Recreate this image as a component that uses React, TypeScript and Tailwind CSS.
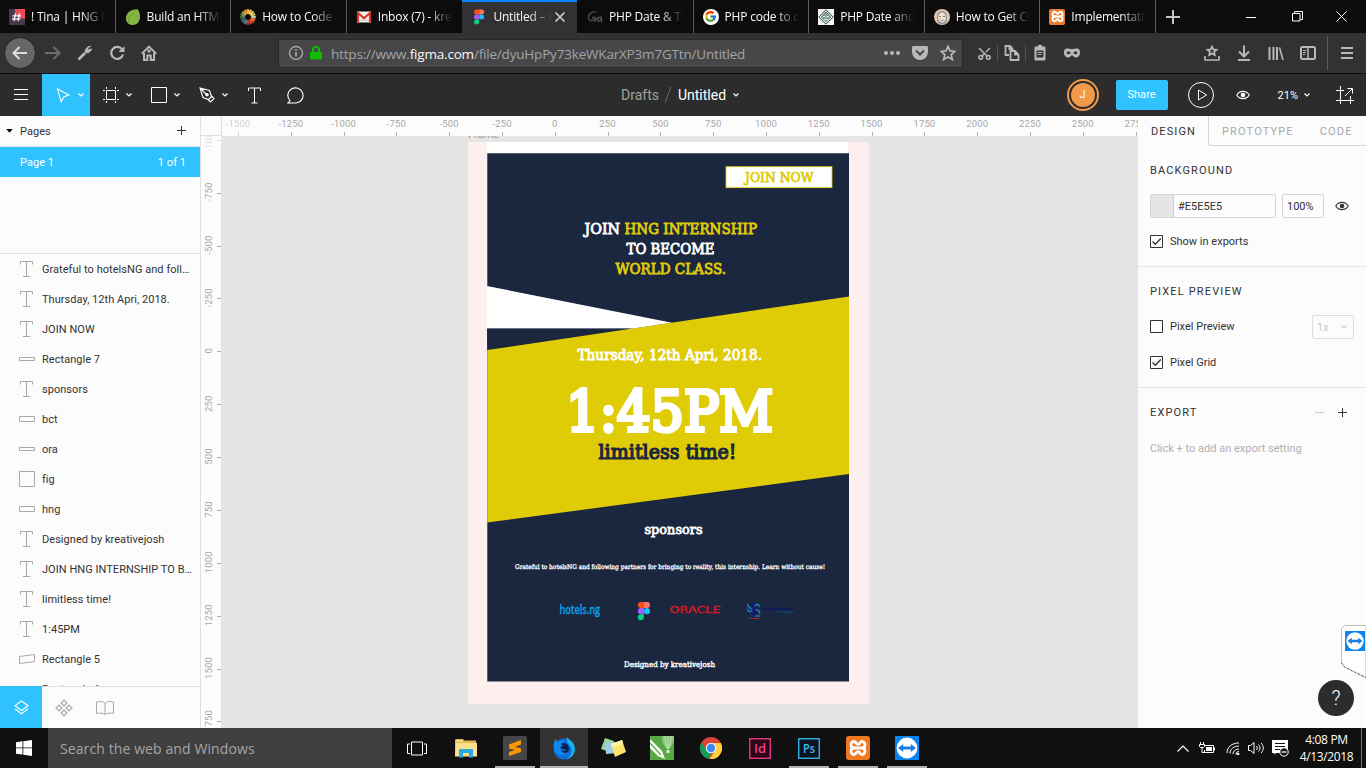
import React from "react";
import { Scissors } from "lucide-react";
import { FcGoogle } from "react-icons/fc";
import { SiXampp } from "react-icons/si";

type SvgProps = { w: number; h: number; children: React.ReactNode; className?: string; sw?: number };

/* Stroked drawing whose user units are CSS pixels */
function Svg({ w, h, children, className = "", sw = 1 }: SvgProps) {
  return (
    <svg width={w} height={h} viewBox={`0 0 ${w} ${h}`} fill="none" stroke="currentColor" strokeWidth={sw} className={"shrink-0 " + className}>
      {children}
    </svg>
  );
}

/* ---------- shared logos ---------- */

function FigmaMark({ x = 0, y = 0, s = 1 }: { x?: number; y?: number; s?: number }) {
  return (
    <g transform={`translate(${x} ${y}) scale(${s})`} stroke="none">
      <path d="M3 0h3v6H3a3 3 0 0 1 0-6z" fill="#f24e1e" />
      <path d="M6 0h3a3 3 0 0 1 0 6H6z" fill="#ff7262" />
      <path d="M3 6h3v6H3a3 3 0 0 1 0-6z" fill="#a259ff" />
      <circle cx="9" cy="9" r="3" fill="#1abcfe" />
      <path d="M3 12h3v3a3 3 0 1 1-3-3z" fill="#0acf83" />
    </g>
  );
}

function Viewer({ size }: { size: number }) {
  return (
    <svg width={size} height={size} viewBox="0 0 24 24" className="shrink-0">
      <rect width="24" height="24" rx="0.6" fill="#0a84ee" />
      <circle cx="12" cy="12" r="10.4" fill="#fff" />
      <path d="M3 12l5.2-4v2.6h7.6V8l5.2 4-5.2 4v-2.6H8.200V16z" fill="#1b7fe0" />
    </svg>
  );
}

/* ---------- browser tabs ---------- */

const Chat = (
  <svg width="16" height="16" viewBox="0 0 16 16">
    <rect width="16" height="16" fill="#4a374c" />
    <path d="M6 0h10v10l-5-1-5-4z" fill="#eb4d5c" />
    <path d="M6.500 4.500L5 12M10.500 4.500L9 12M3.500 6.800h8.500M3 9.800h8.500" stroke="#fff" strokeWidth="1.300" />
  </svg>
);
const Leaf = (
  <svg width="16" height="16" viewBox="0 0 16 16">
    <path d="M12.500 0.300C6 0 1 4 1 9.500c0 4 3 6.500 6.500 6.500C12 16 15 12.500 15 7.500c0-3-1-6-2.500-7.200z" fill="#82b541" />
    <path d="M3 13C3.500 8.500 5.500 6 9 4" stroke="#6a9a2f" fill="none" />
  </svg>
);
const wheel = ["#f4b73c", "#f0c14b", "#ebcf6d", "#d7c66b", "#a9d3cf", "#f06a2a", "#e9542b", "#c43b2f", "#b5382e", "#5f7d86", "#4d6b75", "#3f6066", "#4c7049", "#78994a", "#b8a23f", "#f09a2e"];
const Wheel = (
  <svg width="16" height="16" viewBox="0 0 16 16">
    {wheel.map((c, i) => (
      <path key={i} d="M8 0.200v4.800" stroke={c} strokeWidth="2.300" transform={`rotate(${i * 22.5} 8 8)`} />
    ))}
  </svg>
);
const Mail = (
  <svg width="16" height="16" viewBox="0 0 16 16">
    <rect x="1" y="2.500" width="14" height="11" fill="#f3f0ee" />
    <path d="M3 12l5-5 5 5" fill="#dcd8d6" />
    <path d="M2 13.500V4l6 5 6-5v9.500" fill="none" stroke="#d8382c" strokeWidth="2.200" />
  </svg>
);
const FigmaTab = (
  <svg width="16" height="16" viewBox="0 0 16 16">
    <FigmaMark x={3} y={0.5} s={0.84} />
  </svg>
);
const Ga = (
  <svg width="16" height="16" viewBox="0 0 16 16" fill="none" stroke="#4d4d4d" strokeWidth="1.300">
    <path d="M9.500 3C5.500 1.500 1 5.500 1.500 9c.500 3.500 5 3.500 6.500-.5H5M8 13c-.5-4 5-5.500 6.500-4.500M14.500 8c-3 0-4.500 2.500-3.500 4 1 1 3 0 3.500-4v5.500" />
  </svg>
);
const Goog = (
  <span className="flex size-4 items-center justify-center rounded-full bg-white"><FcGoogle size={13} /></span>
);
const Diamond = (
  <svg width="16" height="16" viewBox="0 0 16 16">
    <rect width="16" height="16" fill="#f4f4f2" />
    <path d="M8 .8l7.200 7.200L8 15.200.8 8z" fill="#dfe5e0" stroke="#3a403c" />
    <path d="M8 3l4.500 5L8 12.500 3.500 8z" fill="#7fa893" stroke="#4d5c54" strokeWidth=".8" />
    <path d="M5 7.500h2.300M8.700 7.500H11M6 10c1 1 3 1 4 0" stroke="#e5ece8" strokeWidth="1" fill="none" />
  </svg>
);
const Face = (
  <svg width="16" height="16" viewBox="0 0 16 16">
    <circle cx="8" cy="8" r="8" fill="#e5c9a6" />
    <path d="M3 12V7c0-3 2-5 5-5s5 2 5 5v5l-2 3H5z" fill="#8f9aa8" />
    <ellipse cx="8" cy="8.500" rx="3.900" ry="5" fill="#f3dfcd" />
    <path d="M5 7.500h2M9 7.500h2M6.500 11c1 .8 2 .8 3 0" stroke="#6f7d90" fill="none" />
  </svg>
);
const XamppTab = (
  <span className="flex size-4 items-center justify-center rounded-[2px] bg-[#ef7a2c] text-white"><XamppKnot size={13} /></span>
);

function XamppKnot({ size }: { size: number }) {
  return (
    <svg width={size} height={size} viewBox="0 0 20 20" fill="none" stroke="#fff" strokeWidth="3.200" strokeLinecap="round">
      <path d="M7 9.800H4.800C2 9.800 1.800 6 3 4c1.500-2 4-1.500 5 .5.800 1.800 3.200 1.800 4 0 1-2 3.500-2.500 5-.5 1.200 2 1 5.800-1.800 5.800H13" />
      <path d="M7 10.200H4.800C2 10.200 1.800 14 3 16c1.500 2 4 1.500 5-.5.800-1.800 3.200-1.800 4 0 1 2 3.500 2.500 5 .5 1.200-2 1-5.800-1.800-5.800H13M8.500 10h3" />
    </svg>
  );
}

const tabs: { icon: React.ReactNode; title: string; active?: boolean; line?: boolean }[] = [
  { icon: Chat, title: "! Tina | HNG Inte", line: true },
  { icon: Leaf, title: "Build an HTML", line: true },
  { icon: Wheel, title: "How to Code a", line: true },
  { icon: Mail, title: "Inbox (7) - kreati" },
  { icon: FigmaTab, title: "Untitled – Fig", active: true },
  { icon: Ga, title: "PHP Date & Tim", line: true },
  { icon: Goog, title: "PHP code to co", line: true },
  { icon: Diamond, title: "PHP Date and T", line: true },
  { icon: Face, title: "How to Get Cu", line: true },
  { icon: XamppTab, title: "Implementatio", line: true },
];

function TabBar() {
  return (
    <div className="flex h-[33px] bg-[#0c0c0d] text-[12px] text-[#f9f9fa]">
      {tabs.map((t) => (
        <div
          key={t.title}
          className={
            "flex w-[115.6px] shrink-0 items-center border-r pl-[9px] " +
            (t.active ? "border-transparent bg-[#323234] bg-clip-padding shadow-[inset_0_2px_0_#0a84ff] " : t.line ? "border-[#5b5b5d] " : "border-transparent ")
          }
        >
          {t.icon}
          <span
            className={
              "ml-[6px] overflow-hidden whitespace-nowrap tracking-[-0.2px] " +
              (t.active
                ? "w-[60px] [mask-image:linear-gradient(90deg,#000_60%,transparent_98%)]"
                : "w-[76px] [mask-image:linear-gradient(90deg,#000_66%,transparent_98%)]")
            }
          >
            {t.title}
          </span>
          {t.active && (
            <Svg w={12} h={12} sw={1.6} className="ml-[1px] text-[#d0d0d2]"><path d="M1.500 1.500l9 9M10.500 1.500l-9 9" /></Svg>
          )}
        </div>
      ))}
      <div className="flex w-[34px] items-center justify-center text-[#c4c4c5]">
        <Svg w={14} h={14} sw={2}><path d="M7 0v14M0 7h14" /></Svg>
      </div>
      <div className="ml-auto flex items-center text-white">
        <div className="flex w-[46px] justify-center"><Svg w={10} h={10}><path d="M0 5.500h10" /></Svg></div>
        <div className="flex w-[46px] justify-center"><Svg w={11} h={11}><path d="M.5 2.500h7.500v7.500H.5zM2.500 2.500V.5h8v8H8.500" /></Svg></div>
        <div className="flex w-[46px] justify-center pr-1"><Svg w={11} h={11}><path d="M.5.5l10 10M10.500.5l-10 10" /></Svg></div>
      </div>
    </div>
  );
}

/* ---------- browser navigation ---------- */

function Slot({ children, className = "w-8" }: { children: React.ReactNode; className?: string }) {
  return <div className={"flex shrink-0 items-center justify-center " + className}>{children}</div>;
}

const starPath = "M8 1.400l2 4.500 4.800.5-3.600 3.200 1.100 4.800L8 11.900l-4.300 2.500 1.100-4.800L1.200 6.400 6 5.900z";

function NavBar() {
  return (
    <div className="flex h-[41px] items-center border-b border-[#0c0c0d] bg-[#323234] pl-1 text-[#b8b8ba]">
      <div className="flex size-8 items-center justify-center rounded-full border border-[#252526] bg-[#666667] text-[#dcdcdc]">
        <Svg w={16} h={16} sw={2}><path d="M15 8H1.500M7.500 2L1.500 8l6 6" /></Svg>
      </div>
      <Slot className="ml-px w-8 text-[#6d6d6f]"><Svg w={16} h={16} sw={2}><path d="M0 8h14.500M8.500 2l6 6-6 6" /></Svg></Slot>
      <Slot><Svg w={16} h={16} sw={2}><path d="M1.500 14.500L8 8" strokeWidth="2.600" /><path d="M13.800 1.200l-3 .6-2.600 2.900v3.100h3.300l3.200-3-.5-1-2.500 1.300-1.200-1.200 2.300-2.500z" fill="currentColor" strokeWidth=".8" /></Svg></Slot>
      <Slot><Svg w={16} h={16} sw={2.200}><path d="M13 4.200A6 6 0 1 0 14 9.500" /><path d="M15.500 1v6h-6z" fill="currentColor" stroke="none" /></Svg></Slot>
      <Slot>
        <Svg w={16} h={16} sw={2}><path d="M.8 8.700L8 1.600l7.200 7.100M3 8v7h3.300v-4.500h3.400V15H13V8" /><path d="M8 4.500v3" strokeWidth="3" /></Svg>
      </Slot>
      <div className="ml-[113px] flex h-[29px] w-[685px] items-center rounded-[2px] border border-[#2a2a2c] bg-[#474749] pl-[9px]">
        <Svg w={16} h={16} sw={1.4} className="text-[#a5a5a7]"><circle cx="8" cy="8" r="6.500" /><path d="M8 7v4.500M8 4v1.700" strokeWidth="1.800" /></Svg>
        <Svg w={14} h={16} className="ml-[5px] text-[#12bc00]">
          <path d="M3.800 8V5a3.200 3.200 0 0 1 6.400 0v3" strokeWidth="2" /><rect x="1" y="7" width="12" height="7.500" rx="1" fill="currentColor" stroke="none" />
        </Svg>
        <span className="ml-[8px] whitespace-nowrap pt-0.5 text-[13.500px] leading-5 tracking-[-0.190px] text-[#a3a3a5]">
          https://www.<span className="text-[#f9f9fa]">figma.com</span>/file/dyuHpPy73keWKarXP3m7GTtn/Untitled
        </span>
        <div className="ml-auto flex items-center">
          <Slot className="w-7"><Svg w={16} h={16}><g fill="currentColor" stroke="none"><circle cx="2" cy="8" r="2" /><circle cx="8" cy="8" r="2" /><circle cx="14" cy="8" r="2" /></g></Svg></Slot>
          <Slot className="w-7"><Svg w={16} h={16}><path d="M1.500 1h13A1.500 1.500 0 0 1 16 2.500V7a8 8 0 0 1-16 0V2.500A1.500 1.500 0 0 1 1.500 1z" fill="currentColor" stroke="none" /><path d="M4 5.500l4 4 4-4" stroke="#474749" strokeWidth="2" /></Svg></Slot>
          <Slot className="w-7"><Svg w={16} h={16} sw={1.7}><path d={starPath} /></Svg></Slot>
        </div>
      </div>
      <div className="ml-[7px] flex items-center">
        <Slot className="w-7"><Scissors size={15} strokeWidth={2.4} className="rotate-[-90deg]" /></Slot>
        <div className="-mx-px h-4 w-0.5 border-l border-[#555557]" />
        <Slot className="w-7">
          <Svg w={16} h={16} sw={1.8}><path d="M5 10H1.500V1H6l2.500 2.500V5M5.500 1v3h3" /><path d="M6.500 6H11l3.500 3.500V15h-8zM11 6v3.500h3.500" /></Svg>
        </Slot>
        <div className="-mx-px h-4 w-0.5 border-l border-[#555557]" />
        <Slot className="w-7">
          <Svg w={12} h={16}><path d="M1.500 2.500h9v12h-9z" fill="currentColor" strokeWidth="2" strokeLinejoin="round" /><path d="M4 1.500h4" strokeWidth="3" /><path d="M2.500 5.500h7v6l-1 1h-6z" fill="#323234" stroke="none" /><path d="M3.500 7.500h5M3.500 9.500h4" /></Svg>
        </Slot>
        <Slot className="ml-0.5 w-8">
          <Svg w={16} h={10}><path d="M2.500 0.500C5 .3 6 1.200 8 1.200S11 .3 13.500.5C15 .7 16 2 16 4.500 16 8 14 9.500 12 9.500c-2.200 0-2.700-2-4-2s-1.800 2-4 2C2 9.500 0 8 0 4.500 0 2 1 .7 2.500.5z" fill="currentColor" stroke="none" /><ellipse cx="4.500" cy="4.800" rx="2" ry="1.400" fill="#323234" stroke="none" /><ellipse cx="11.500" cy="4.800" rx="2" ry="1.400" fill="#323234" stroke="none" /></Svg>
        </Slot>
      </div>
      <div className="ml-auto flex items-center pr-[3px]">
        <Slot><Svg w={16} h={16} sw={1.7}><path d="M8 1.500l1.300 2.900 3.200.4-2.400 2.100.7 3.200L8 8.500l-2.800 1.600.7-3.200-2.400-2.100 3.200-.4zM1 11v4h14v-4" /></Svg></Slot>
        <Slot><Svg w={16} h={16} sw={2}><path d="M8 0.500v11M3 6.500l5 5 5-5M2 15h12" /></Svg></Slot>
        <Slot><Svg w={16} h={16} sw={2}><path d="M1.500 2v13M5.500 2v13M9 2v13" /><path d="M11.500 2.500L15 15" strokeWidth="1.600" /></Svg></Slot>
        <Slot><Svg w={16} h={14} sw={2}><rect x="1" y="1" width="14" height="12" rx="1.500" /><path d="M8 1v12" strokeWidth="1.500" /><path d="M3 4.500h3M3 6.500h3M3 8.500h2" strokeWidth="1" /></Svg></Slot>
        <div className="ml-[3px] h-[34px] border-l border-[#5e5e60]" />
        <Slot className="ml-[3px] w-8"><Svg w={12} h={12} sw={2}><path d="M0 1h12M0 6h12M0 11h12" /></Svg></Slot>
      </div>
    </div>
  );
}

/* ---------- editor toolbar ---------- */

const Chevron = ({ className = "" }: { className?: string }) => (
  <Svg w={6} h={4} sw={1.2} className={className}><path d="M.5.5L3 3 5.500.5" /></Svg>
);

function Tool({ children, active }: { children: React.ReactNode; active?: boolean }) {
  return (
    <div className={"flex h-full w-12 items-center " + (active ? "bg-[#30c2ff]" : "")}>
      <div className="ml-[11px] flex w-5 justify-center">{children}</div>
      <Chevron className="ml-[5px]" />
    </div>
  );
}

const Eye = ({ className = "" }: { className?: string }) => (
  <Svg w={14} h={10} sw={1.1} className={className}>
    <path d="M.8 5C3.500.2 10.500.2 13.200 5 10.500 9.800 3.500 9.800.8 5z" /><circle cx="7" cy="5" r="1.800" fill="currentColor" />
  </Svg>
);

function Toolbar() {
  return (
    <div className="flex h-[42px] items-center bg-[#2c2c2c] font-['Roboto',sans-serif] text-white">
      <Slot className="w-[42px]"><Svg w={14} h={12}><path d="M0 .5h14M0 5.500h14M0 10.500h14" /></Svg></Slot>
      <Tool active><Svg w={14} h={15} sw={1.1}><path d="M1.500 1l11.500 6-5 1.700-2.800 5z" /></Svg></Tool>
      <Tool><Svg w={16} h={16}><path d="M3.500 3.500h9v9h-9zM3.500 0v2M12.500 0v2M3.500 14v2M12.500 14v2M0 3.500h2M0 12.500h2M14 3.500h2M14 12.500h2" /></Svg></Tool>
      <Tool><Svg w={16} h={16}><path d="M.5.5h15v15H.5z" /></Svg></Tool>
      <Tool><Svg w={16} h={16} sw={1.1}><path d="M1 1l9.500 2.500 2 6-3 3L4 10.500zM1 1l6.500 6.500M12.500 9l2.500 2.500-3.500 3.500L9 12.500" /><circle cx="8" cy="7.800" r="1.200" fill="currentColor" /></Svg></Tool>
      <Slot className="w-[40px]"><Svg w={13} h={17}><path d="M.5 4V1h12v3M6.500 1v15M3.500 16h6" /></Svg></Slot>
      <Slot className="w-[43px]"><Svg w={18} h={17} sw={1.1}><path d="M3 13.800A7.600 7.600 0 1 1 9.500 16H1z" /></Svg></Slot>
      <div className="ml-[304px] flex items-center text-[14px]">
        <span className="text-[#a0a0a0]">Drafts</span>
        <Svg w={8} h={16} className="ml-[5px] text-[#6a6a6a]"><path d="M1 16L7 0" /></Svg>
        <span className="ml-[6px]">Untitled</span>
        <Chevron className="ml-[7px]" />
      </div>
      <div className="ml-auto flex h-full items-center">
        <div className="flex size-8 items-center justify-center rounded-full border-2 border-[#f2994a]">
          <div className="flex size-6 items-center justify-center rounded-full bg-[#f2994a] text-[11px]">J</div>
        </div>
        <div className="ml-[17px] flex h-[30px] w-[52px] items-center justify-center rounded-[2px] bg-[#30c2ff] pt-px text-[11px] tracking-[0.05px]">Share</div>
        <Svg w={28} h={28} className="ml-[19px]"><circle cx="14" cy="14" r="12.500" /><path d="M11.500 9v10l8-5z" /></Svg>
        <Eye className="ml-[21px]" />
        <span className="ml-[28px] pt-0.5 text-[11px]">21%</span>
        <Chevron className="ml-[6px]" />
        <Svg w={20} h={20} className="mr-[11px] ml-[25px]"><path d="M1 5.500h8M5.500 1v18M1 15.500h18M15.500 11v8M10 11l7-7M12.500 3.500h5v5" /></Svg>
      </div>
    </div>
  );
}

/* ---------- layers panel ---------- */

type Kind = "text" | "thin" | "bar" | "square" | "skew";
const layers: [Kind, string][] = [
  ["text", "Grateful to hotelsNG and following partners"],
  ["text", "Thursday, 12th Apri, 2018."],
  ["text", "JOIN NOW"],
  ["thin", "Rectangle 7"],
  ["text", "sponsors"],
  ["bar", "bct"],
  ["thin", "ora"],
  ["square", "fig"],
  ["bar", "hng"],
  ["text", "Designed by kreativejosh"],
  ["text", "JOIN HNG INTERNSHIP TO BECOME"],
  ["text", "limitless time!"],
  ["text", "1:45PM"],
  ["skew", "Rectangle 5"],
  ["bar", "Rectangle 6"],
];
const kindPath: Record<Kind, string> = {
  text: "M1.500 3.500v-3h12v3M7.500.5v15M4 15.500h7",
  thin: "M.5 6.500h15v3H.5z",
  bar: "M.5 5.500h15v5H.5z",
  square: "M.5.5h15v15H.5z",
  skew: "M.5 5.500l15-2v7l-15 2z",
};

function LeftPanel() {
  return (
    <aside className="flex w-[201px] shrink-0 flex-col border-r border-[#e0e0e0] bg-[#fcfcfc] text-[11px] tracking-[0.04px] text-[#333]">
      <div className="flex h-[31px] shrink-0 items-center border-b border-[#e5e5e5] pr-[14px] pl-[6px]">
        <svg width="7" height="4" viewBox="0 0 7 4" fill="#000"><path d="M.3 0h6.400L3.500 3.800z" /></svg>
        <span className="ml-[7px] pt-[3px]">Pages</span>
        <Svg w={9} h={9} className="mb-0.5 ml-auto"><path d="M4.500 0v9M0 4.500h9" /></Svg>
      </div>
      <div className="flex h-[30px] shrink-0 items-center justify-between bg-[#30c2ff] pt-0.5 pr-[14px] pl-5 text-white">
        <span>Page 1</span>
        <span>1 of 1</span>
      </div>
      <div className="h-[77px] shrink-0 border-b border-[#e0e0e0]" />
      <div className="min-h-0 flex-1 overflow-hidden">
        {layers.map(([kind, name]) => (
          <div key={name} className="flex h-[30px] items-center pr-[7px] pl-[19px]">
            <Svg w={16} h={16} className="text-[#a8a8a8]"><path d={kindPath[kind]} /></Svg>
            <span className="ml-[7px] truncate pt-0.5">{name}</span>
          </div>
        ))}
      </div>
      <div className="flex h-[42px] shrink-0 border-t border-[#e0e0e0] text-[#a8a8a8]">
        <Slot className="-mt-px w-[42px] bg-[#30c2ff] text-white">
          <Svg w={15} h={15} sw={1.1}><path d="M7.500 1l6.500 4.700-6.500 4.800L1 5.700zM1 9l6.500 4.800L14 9" /></Svg>
        </Slot>
        <Slot className="w-[43px]">
          <Svg w={18} h={18} sw={1.1}><path d="M9 1l3 3-3 3-3-3zM9 11l3 3-3 3-3-3zM4 6l3 3-3 3-3-3zM14 6l3 3-3 3-3-3z" /></Svg>
        </Slot>
        <Slot className="w-[40px]">
          <Svg w={18} h={14}><path d="M9 2.500C7.500.3 3.500.2.5 1v11.500c3-.6 6.500-.6 8.500 1 2-1.600 5.500-1.600 8.500-1V1c-3-.8-7-.7-8.500 1.500zV13" /></Svg>
        </Slot>
      </div>
    </aside>
  );
}

/* ---------- canvas ---------- */

const steps = Array.from({ length: 18 }, (_, i) => -1500 + i * 250);

function Rulers({ vertical }: { vertical?: boolean }) {
  if (vertical) {
    return (
      <svg width="20" height="592" viewBox="201 136 20 592" className="shrink-0 bg-[#fcfcfc]">
        {steps.filter((v) => v >= -1000 && v <= 1750).map((v) => {
          const y = 351.3 + v * 0.2115;
          return (
            <g key={v} opacity={v === -1000 ? 0.35 : 1}>
              <path d={`M217 ${Math.round(y) + 0.5}h4`} stroke="#b3b3b3" />
              <text transform={`translate(212 ${y - 0.5}) rotate(-90)`} textAnchor="middle" fontSize="9.500" letterSpacing=".15" fill="#a8a8a8">{v}</text>
            </g>
          );
        })}
      </svg>
    );
  }
  return (
    <svg width="916" height="20" viewBox="222 116 916 20" className="block">
      {steps.map((v) => {
        const x = 555.3 + v * 0.2112;
        return (
          <g key={v} opacity={v === -1500 ? 0.5 : 1}>
            <path d={`M${Math.round(x - 0.5) + 0.5} 132v4`} stroke="#b3b3b3" />
            <text x={x - 0.5} y="127" textAnchor="middle" fontSize="9.500" letterSpacing=".15" fill="#a8a8a8">{v}</text>
          </g>
        );
      })}
    </svg>
  );
}

type LineProps = { x: number; to: number; y: number; size: number; fill?: string; heavy?: number; children: string };
const Line = ({ x, to, y, size, fill = "#fff", heavy = 0, children }: LineProps) => (
  <text x={x} y={y} fontSize={size} fill={fill} stroke={heavy ? fill : "none"} strokeWidth={heavy} textLength={to - x} lengthAdjust="spacingAndGlyphs">{children}</text>
);

function Artboard() {
  const gold = "#e0cc06";
  const navy = "#1a273e";
  return (
    <svg width="917" height="592" viewBox="221 136 917 592" className="block shrink-0 bg-[#e5e5e5]">
      <text x="468" y="137.800" fontSize="11" fill="#999" fontFamily="Roboto">Frame</text>
      <rect x="468" y="142" width="401" height="562" fill="#fcefee" />
      <path d="M487 142h361v12H487z" fill="#fff" />
      <path d="M487.300 153.300h361.700v528.200H487.300z" fill={navy} />
      <path d="M487 286l185 36.800-40 6H487z" fill="#fff" />
      <path d="M487 328.500h145.500L487.300 350z" fill={navy} />
      <path d="M487.300 350L849 296.500V474L487.300 522.600z" fill={gold} />
      <rect x="726" y="166.700" width="106" height="21" fill="#fff" stroke={gold} strokeWidth=".8" />
      <g fontFamily="'DejaVu Serif', serif" fontWeight="400">
        <Line x={745} to={813.5} y={182.200} size={12.500} heavy={0.75} fill={gold}>JOIN NOW</Line>
        <Line x={584.500} to={620} y={233.800} size={14.400} heavy={0.850}>JOIN</Line>
        <Line x={624.500} to={757} y={233.800} size={14.400} heavy={0.850} fill={gold}>HNG INTERNSHIP</Line>
        <Line x={626.500} to={714.5} y={253.800} size={14.400} heavy={0.850}>TO BECOME</Line>
        <Line x={615.500} to={726} y={273.800} size={14.400} heavy={0.850} fill={gold}>WORLD CLASS.</Line>
        <Line x={577.500} to={762} y={359.800} size={14.800} heavy={0.9}>Thursday, 12th Apri, 2018.</Line>
        <Line x={566} to={773} y={431.200} size={55.500} heavy={4}>1:45PM</Line>
        <Line x={598.500} to={736.500} y={459.200} size={19.500} heavy={1.200} fill={navy}>limitless time!</Line>
        <Line x={644.500} to={702.500} y={533.800} size={13.200} heavy={0.8}>sponsors</Line>
        <Line x={515} to={825} y={568.700} size={6.400} heavy={0.3}>Grateful to hotelsNG and following partners for bringing to reality, this internship. Learn without cause!</Line>
        <Line x={624} to={715} y={667} size={7.700} heavy={0.4}>Designed by kreativejosh</Line>
      </g>
      <g fontFamily="'Open Sans', sans-serif" fontWeight="600">
        <Line x={559.500} to={600} y={614} size={12.500} heavy={0.3} fill="#0a9fe8">hotels.ng</Line>
      </g>
      <FigmaMark x={637.8} y={602} s={1.02} />
      <g fontFamily="'DejaVu Sans', sans-serif">
        <Line x={669.500} to={720.500} y={613} size={9} heavy={0.35} fill="#d9191f">ORACLE</Line>
      </g>
      <path d="M721.500 606.500h.8" stroke="#d9191f" strokeWidth=".8" />
      <g fill="none" strokeWidth="1.700">
        <path d="M753.500 608c-4 1-6-1-5.500-4M752 610c-2 3-4.500 1.500-4.500-1M754 610c4-1 6 1 5.500 4M755 606c2-3 4.500-1.500 4.500 1" stroke="#147bb8" />
        <path d="M754 603c-3 1-3 4-.5 5.500M753 614.500c3-1 3-3.500.5-5.500" stroke="#1010a0" />
        <path d="M749 616h5" stroke="#1a1f90" strokeWidth="1.500" />
        <path d="M755 616h5" stroke="#147bb8" strokeWidth="1.500" />
        <path d="M749 618.400h11" stroke="#a02533" strokeWidth="1" />
      </g>
      <g fontFamily="'Liberation Sans', sans-serif" fontWeight="700">
        <Line x={762} to={793} y={609.500} size={3.800} fill="#07077c">Bluechip Technologies</Line>
        <Line x={775} to={793} y={612.500} size={2.800} fill="#11507c">...creating delight</Line>
      </g>
    </svg>
  );
}

/* ---------- properties panel ---------- */

function Check({ label, on }: { label: string; on?: boolean }) {
  return (
    <div className="flex h-[15px] items-center">
      <Svg w={13} h={13}><path d="M.5.5h12v12H.5z" />{on && <path d="M2.500 6.500L5.300 9.300l5.500-5.800" strokeWidth="1.300" />}</Svg>
      <span className="ml-[7px] pt-0.5">{label}</span>
    </div>
  );
}

function RightPanel() {
  return (
    <aside className="flex w-[228px] shrink-0 flex-col bg-[#fcfcfc] text-[11px] text-[#333]">
      <div className="flex h-[30px] tracking-[1.15px]">
        <div className="flex w-[70px] items-center justify-center pt-0.5 pl-px">DESIGN</div>
        <div className="flex flex-1 items-center rounded-bl-[3px] border-b border-l border-[#d5d5d5] pt-[3px] pl-[13px] text-[#a9a9a9]">
          <span>PROTOTYPE</span>
          <span className="ml-[26px]">CODE</span>
        </div>
      </div>
      <section className="h-[121px] border-b border-[#e5e5e5] px-3 pt-4">
        <h2 className="h-4 leading-[18px] tracking-[1.150px]">BACKGROUND</h2>
        <div className="mt-4 flex h-6 items-center">
          <div className="flex h-6 w-[126px] items-center overflow-hidden rounded-[2px] border border-[#d5d5d5]">
            <div className="h-full w-[23px] border-r border-[#cfcfcf] bg-[#e5e5e5]" />
            <span className="ml-1 pt-0.5">#E5E5E5</span>
          </div>
          <div className="ml-[6px] flex h-6 w-[42px] items-center rounded-[2px] border border-[#d5d5d5] pt-0.5 pl-1">100%</div>
          <Eye className="ml-[11px]" />
        </div>
        <div className="mt-4"><Check label="Show in exports" on /></div>
      </section>
      <section className="h-[121px] border-b border-[#e5e5e5] px-3 pt-4">
        <h2 className="h-4 leading-[18px] tracking-[1.150px]">PIXEL PREVIEW</h2>
        <div className="mt-4 flex h-6 items-start justify-between">
          <div className="pt-1"><Check label="Pixel Preview" /></div>
          <div className="flex h-6 w-[42px] items-center justify-between rounded-[2px] border border-[#dcdcdc] pr-[6px] pl-1 text-[#c8c8c8]">
            <span className="pt-0.5">1x</span> <Chevron />
          </div>
        </div>
        <div className="mt-4"><Check label="Pixel Grid" on /></div>
      </section>
      <section className="px-3 pt-4">
        <div className="flex h-4 items-center">
          <h2 className="pt-0.5 tracking-[1.150px]">EXPORT</h2>
          <Svg w={9} h={9} className="ml-auto text-[#ccc]"><path d="M0 4.500h9" /></Svg>
          <Svg w={9} h={9} className="mr-[7px] ml-[14px]"><path d="M4.500 0v9M0 4.500h9" /></Svg>
        </div>
        <p className="mt-[21px] leading-4 text-[#b0b0b0]">Click + to add an export setting</p>
      </section>
    </aside>
  );
}

/* ---------- taskbar ---------- */

const AdobeTile = ({ label, color, bg }: { label: string; color: string; bg: string }) => (
  <svg width="22" height="21" viewBox="0 0 22 21">
    <rect x=".75" y=".75" width="20.500" height="19.500" fill={bg} stroke={color} strokeWidth="1.300" />
    <text x="11" y="15" textAnchor="middle" fontSize="12" fontWeight="600" fontFamily="'Open Sans', sans-serif" textLength="12" lengthAdjust="spacingAndGlyphs" fill={color}>{label}</text>
  </svg>
);

const apps: { name: string; art: React.ReactNode; mark?: boolean; front?: boolean }[] = [
  {
    name: "views",
    art: <Svg w={20} h={15} className="text-white"><path d="M4.500 1h11v13h-11zM3 3H.5v9.500H3M17 3h2.500v9.500H17" /></Svg>,
  },
  {
    name: "files",
    art: (
      <svg width="22" height="20" viewBox="0 0 22 20">
        <path d="M0 2l1-1h7l1 1.500h12V18H0z" fill="#e6b94d" /><path d="M1 5h21v13.500H0z" fill="#fbe08d" />
        <path d="M4 19.500V11h14v8.500h-4V15H8v4.500z" fill="#29abe2" /><path d="M1 3h7" stroke="#fff2c4" />
      </svg>
    ),
  },
  {
    name: "sublime",
    mark: true,
    art: (
      <svg width="24" height="24" viewBox="0 0 24 24">
        <rect width="24" height="24" rx="1.500" fill="#474747" />
        <path d="M6 8.500L18 4v4.500l-6 2.200L18 12.500V16L6 20v-4l6-2L6 12.500z" fill="#ff9800" />
      </svg>
    ),
  },
  {
    name: "firefox",
    mark: true,
    front: true,
    art: (
      <svg width="24" height="24" viewBox="0 0 24 24">
        <circle cx="12" cy="13" r="10.500" fill="#0a6fd8" />
        <path d="M15 1c1 2 6 4 7.500 9C24 16 21 22 14 23.500c5-3 7-8 5-12-1-2-5-5-4-10.500z" fill="#17b5f7" />
        <path d="M2 7l1-4 3 3 4-2 2 2-1 2 3 1-2 2H8l1 4c3 2 6 1 8-2-1 5-5 7-9 5.500C3 19 1 12 2 7z" fill="#1287ee" />
        <path d="M9 8c3-2.500 8 0 8 5s-6 5-8 1.500c2 1 4 .5 5-1l-4-.5-2-2 3-1z" fill="#0b2253" />
      </svg>
    ),
  },
  {
    name: "notes",
    art: (
      <svg width="25" height="20" viewBox="0 0 25 20">
        <path d="M4 0l9 3-4 11-9-3z" fill="#9bd49b" /><path d="M4 5l11-1 2 11-12 1z" fill="#9fcbe6" />
        <path d="M10 6l11-4 4 12-11 5z" fill="#fae36b" /><path d="M10 6l11-4 1.200 3.500L11.500 10z" fill="#fdf0a4" />
      </svg>
    ),
  },
  {
    name: "corel",
    art: (
      <svg width="24" height="24" viewBox="0 0 24 24">
        <rect width="24" height="24" fill="#58a942" /><path d="M12 0h12v4c-1 5-4 7-5 9h-2c-1-2-4-4-5-9z" fill="#8bc67c" />
        <path d="M15 0c0 5 1 9 2.500 13M21 0c0 5-1 9-2.500 13M18 0v13" stroke="#d6edd0" strokeWidth=".7" fill="none" />
        <path d="M16.500 14h3v3h-3z" fill="#d6edd0" /><path d="M0 3l12 12 3 8-7-3L0 12z" fill="#fff" /><path d="M0 7l11 12" stroke="#58a942" strokeWidth="1.200" />
      </svg>
    ),
  },
  {
    name: "chrome",
    art: (
      <svg width="22" height="22" viewBox="0 0 22 22">
        <circle cx="11" cy="11" r="11" fill="#db4437" />
        <path d="M1.500 5.500L6.700 13.500 11 16l-1.500 6A11 11 0 0 1 1.500 5.500z" fill="#0f9d58" />
        <path d="M11 6h9.800A11 11 0 0 1 9.500 22l5.800-8.500z" fill="#ffcd40" />
        <circle cx="11" cy="11" r="5.300" fill="#f4f4f4" /><circle cx="11" cy="11" r="4.200" fill="#4285f4" />
      </svg>
    ),
  },
  { name: "indesign", art: <AdobeTile label="Id" color="#f43a8b" bg="#2b0618" /> },
  { name: "photoshop", art: <AdobeTile label="Ps" color="#35c1f1" bg="#0b1220" />, mark: true },
  {
    name: "xampp",
    mark: true,
    art: <span className="flex size-6 items-center justify-center rounded-[3px] bg-[#f37623]"><XamppKnot size={18} /></span>,
  },
  { name: "viewer", art: <Viewer size={24} />, mark: true },
];

function Taskbar() {
  return (
    <footer className="flex h-10 bg-[#101010] text-white">
      <Slot className="w-12">
        <svg width="16" height="16" viewBox="0 0 16 16" fill="#fff"><path d="M0 2.200l6.500-.9v6.200H0zM7.300 1.200L16 0v7.500H7.300zM0 8.300h6.500v6.300L0 13.700zM7.300 8.300H16V16l-8.700-1.200z" /></svg>
      </Slot>
      <div className="mr-px flex w-[344px] items-center bg-[#3f3f3f] pl-3 text-[14px] tracking-[0.1px] text-[#a5a5a5]">Search the web and Windows</div>
      {apps.map((a) => (
        <div key={a.name} className={"relative mr-px flex w-12 shrink-0 items-center justify-center " + (a.front ? "bg-[#333]" : "")}>
          {a.art}
          {a.mark && <span className={"absolute bottom-0 h-0.5 bg-[#b5b3ae] " + (a.front ? "inset-x-0" : "inset-x-1")} />}
        </div>
      ))}
      <div className="ml-auto flex items-center">
        <Svg w={12} h={7} sw={1.2}><path d="M.5 6.500L6 1l5.500 5.500" /></Svg>
        <Svg w={17} h={12} className="ml-[10px]"><path d="M5.500 3.500h9v7h-9V8M15.500 5.500v3M1.500 0v2M4.500 0v2M.5 2.500h5v2l-1 1h-3l-1-1zM3 6v4.500h2.500" /><path d="M7 5h6v4H7z" fill="currentColor" stroke="none" /></Svg>
        <Svg w={14} h={14} className="ml-[10px]"><path d="M1 12C1 6 6 2 13 2M4 12.500C4 8 8 5 13 5M7 13c0-3 3-5 6-5M10 13.500c0-2 1-3 3-3" /><circle cx="12" cy="13" r="1" fill="currentColor" /></Svg>
        <Svg w={17} h={14} className="ml-[8px]"><path d="M.5 4.500h2l3.500-3v11l-3.500-3h-2zM8.500 5c1 1 1 3 0 4M10.500 3.500c2 2 2 5 0 7M13 2c3 3 3 7 0 10" /></Svg>
        <svg width="17" height="17" viewBox="0 0 17 17" className="ml-[7px]"><path d="M0 0h16v13H4l-1.500 2V13H0z" fill="#fff" /><path d="M3 3.500h10M3 6.500h10M3 9.500h5" stroke="#101010" /><circle cx="12" cy="12" r="4.200" fill="#101010" stroke="#fff" /><path d="M9.500 12h5" stroke="#fff" strokeWidth="1.300" /></svg>
        <div className="ml-[7px] w-[61px] text-center text-[12px] leading-[17px] tracking-[-0.35px] whitespace-nowrap">
          <div>4:08 PM</div>
          <div>4/13/2018</div>
        </div>
        <div className="mr-1 ml-[4px] h-10 border-l border-[#777]" />
      </div>
    </footer>
  );
}

export default function App() {
  return (
    <div className="relative flex h-[768px] w-[1366px] flex-col overflow-hidden font-['Open_Sans','Noto_Sans',sans-serif]">
      <TabBar />
      <NavBar />
      <Toolbar />
      <main className="flex h-[612px] font-['Roboto',sans-serif]">
        <LeftPanel />
        <div className="flex w-[937px] shrink-0 flex-col">
          <div className="flex h-5 bg-[#fcfcfc]">
            <div className="w-[21px] shrink-0 border-r border-b border-[#e0e0e0]" />
            <Rulers />
          </div>
          <div className="flex">
            <Rulers vertical />
            <Artboard />
          </div>
        </div>
        <RightPanel />
      </main>
      <Taskbar />
      <div className="absolute top-[625px] left-[1341px]">
        <svg width="25" height="54" viewBox="0 0 25 54">
          <path d="M25 .5H3.500l-3 3V38l3 4 21.500 11z" fill="#fff" stroke="#b9bec5" />
          <path d="M.5 38l3 4 21.500 10.500" fill="none" stroke="#333" strokeDasharray="2 2" strokeWidth=".8" />
        </svg>
      </div>
      <div className="absolute top-[631px] left-[1345px]"><Viewer size={20} /></div>
      <div className="absolute top-[680px] left-[1318px] flex size-9 items-center justify-center rounded-full bg-[#2c2c2c] font-['Roboto',sans-serif] text-[20px] font-light text-white">?</div>
    </div>
  );
}
